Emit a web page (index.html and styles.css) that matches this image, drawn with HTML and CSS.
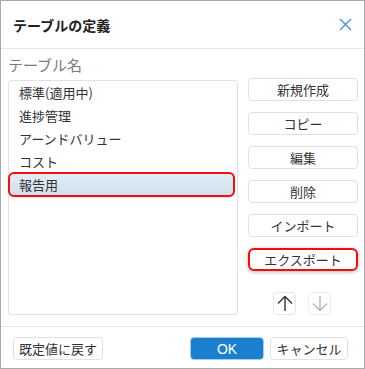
FILE: index.html
```html
<!DOCTYPE html>
<html lang="ja">
<head>
    <meta charset="UTF-8">
    <meta name="viewport" content="width=device-width, initial-scale=1.0">
    <title>テーブルの定義</title>
    <link rel="stylesheet" href="styles.css">
</head>
<body>
    <div class="dialog">
        <div class="dialog-header">
            <span class="dialog-title">テーブルの定義</span>
            <span class="close-btn">
                <svg width="13" height="13" viewBox="0 0 13 13">
                    <path d="M1 1 L12 12 M12 1 L1 12" stroke="#3f8fd9" stroke-width="1.3" fill="none"/>
                </svg>
            </span>
        </div>
        <div class="dialog-body">
            <div class="field-label">テーブル名</div>
            <div class="table-row">
                <div class="table-list">
                    <div class="list-item">標準(適用中)</div>
                    <div class="list-item">進捗管理</div>
                    <div class="list-item">アーンドバリュー</div>
                    <div class="list-item">コスト</div>
                    <div class="list-item selected">報告用</div>
                </div>
                <div class="side-buttons">
                    <button class="btn side-btn">新規作成</button>
                    <button class="btn side-btn">コピー</button>
                    <button class="btn side-btn">編集</button>
                    <button class="btn side-btn">削除</button>
                    <button class="btn side-btn">インポート</button>
                    <button class="btn side-btn marked">エクスポート</button>
                    <div class="move-buttons">
                        <button class="btn move-btn">
                            <svg width="16" height="17" viewBox="0 0 16 17">
                                <path d="M8 16 L8 1.5 M1 8.5 L8 1.5 L15 8.5" stroke="#333" stroke-width="1.4" fill="none"/>
                            </svg>
                        </button>
                        <button class="btn move-btn disabled">
                            <svg width="16" height="17" viewBox="0 0 16 17">
                                <path d="M8 1 L8 15.5 M1 8.5 L8 15.5 L15 8.5" stroke="#b8b8b8" stroke-width="1.4" fill="none"/>
                            </svg>
                        </button>
                    </div>
                </div>
            </div>
        </div>
        <div class="dialog-footer">
            <button class="btn footer-btn">既定値に戻す</button>
            <div class="footer-right">
                <button class="btn btn-primary">OK</button>
                <button class="btn footer-btn cancel">キャンセル</button>
            </div>
        </div>
    </div>
</body>
</html>
```

FILE: styles.css
```css
body {
    margin: 0;
    padding: 0;
    background-color: white;
    font-family: "Noto Sans CJK JP", "Noto Sans", sans-serif;
    color: #333;
}
.dialog {
    width: 365px;
    height: 369px;
    box-sizing: border-box;
    border: 1px solid #a9a9a9;
    background-color: white;
    display: flex;
    flex-direction: column;
}
.dialog-header {
    height: 47px;
    border-bottom: 1px solid #e6e6e6;
    display: flex;
    align-items: center;
    justify-content: space-between;
    padding: 0 12px 0 12px;
}
.dialog-title {
    font-size: 14px;
    font-weight: bold;
    color: #222;
}
.close-btn {
    display: flex;
    margin-right: 0;
}
.dialog-body {
    padding: 0 6px 0 7px;
}
.field-label {
    height: 31px;
    box-sizing: border-box;
    padding-top: 6px;
    line-height: 20px;
    font-size: 15px;
    color: #7b7b7b;
}
.table-row {
    display: flex;
    gap: 10px;
    height: 235px;
}
.table-list {
    width: 230px;
    box-sizing: border-box;
    border: 1px solid #e2e2e2;
    border-radius: 3px;
    padding-right: 3px;
}
.list-item {
    height: 23px;
    line-height: 23px;
    padding-left: 10px;
    font-size: 13px;
    color: #333;
}
.list-item.selected {
    background: linear-gradient(#e3edf6, #cfdfec);
    outline: 2px solid #f01010;
    outline-offset: -1px;
    border-radius: 5px;
    box-shadow: 0 1px 3px rgba(0, 0, 0, 0.25);
}
.side-buttons {
    width: 110px;
    display: flex;
    flex-direction: column;
    gap: 11px;
    margin-top: -2px;
}
.btn {
    font-family: "Noto Sans CJK JP", "Noto Sans", sans-serif;
    background-color: white;
    border: 1px solid #e1e1e1;
    border-radius: 4px;
    color: #333;
    padding: 0;
    cursor: pointer;
}
.side-btn {
    height: 23px;
    font-size: 13px;
}
.side-btn.marked {
    border: 2px solid #f20d0d;
    border-radius: 6px;
    box-shadow: 0 1px 4px rgba(0, 0, 0, 0.3);
}
.move-buttons {
    display: flex;
    justify-content: center;
    gap: 12px;
    margin-top: 10px;
    padding-right: 2px;
}
.move-btn {
    width: 23px;
    height: 23px;
    display: flex;
    align-items: center;
    justify-content: center;
    border-color: #e6e6e6;
}
.move-btn.disabled {
    border-color: #eeeeee;
}
.dialog-footer {
    margin-top: 11px;
    border-top: 1px solid #e6e6e6;
    flex: 1;
    display: flex;
    justify-content: space-between;
    align-items: flex-start;
    padding: 10px 16px 0 12px;
}
.footer-right {
    display: flex;
    gap: 6px;
}
.footer-btn {
    height: 23px;
    width: 90px;
    font-size: 13px;
}
.footer-btn.cancel {
    width: 78px;
}
.btn-primary {
    width: 74px;
    height: 23px;
    background-color: #1b7fd0;
    border: 1px solid #a6cdef;
    color: white;
    font-size: 14px;
    font-family: "Liberation Sans", Arial, sans-serif;
}
```
